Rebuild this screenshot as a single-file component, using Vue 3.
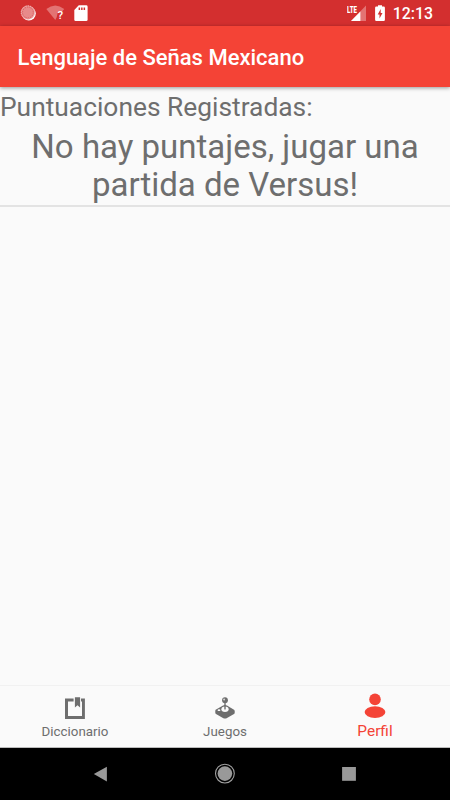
<script setup>
/**
 * App.vue
 *
 * Profile screen: registered scores and bottom navigation.
 */

import { ref } from 'vue'

const title = 'Lenguaje de Señas Mexicano'
const clock = '12:13'

// Bottom navigation entries
const tabs = [
  { id: 'dictionary', label: 'Diccionario' },
  { id: 'games', label: 'Juegos' },
  { id: 'profile', label: 'Perfil' }
]

const activeTab = ref('profile')
</script>

<template>
  <div class="screen">
    <!-- System status bar -->
    <header class="status-bar">
      <div class="status-left">
        <svg class="sync" width="17" height="17" viewBox="0 0 17 17">
          <circle cx="8.8" cy="8.6" r="7" fill="#fff" />
          <circle cx="7.9" cy="7.5" r="7" fill="#e88a8a" />
          <circle cx="7.9" cy="7.5" r="5.4" fill="none" stroke="#d95b5b" stroke-width="1" stroke-dasharray="1.2 1.2" />
          <circle cx="7.9" cy="7.5" r="6.7" fill="none" stroke="#f3c4c4" stroke-width="0.9" stroke-dasharray="1.2 1.2" />
        </svg>
        <div class="wifi">
          <svg width="20" height="16" viewBox="0 0 20 16">
            <path d="M0.3 4 Q9.3 -3 18.2 4 L15.4 7.6 H11.8 L10.6 12.6 L9.3 15 Z" fill="#e37373" />
          </svg>
          <span class="wifi-mark">?</span>
        </div>
        <svg class="sd" width="14" height="17" viewBox="0 0 14 17">
          <path d="M4.8 0.3 H12.2 Q13.6 0.3 13.6 1.7 V14.7 Q13.6 16 12.2 16 H1.6 Q0.3 16 0.3 14.7 V5 Z" fill="#fff" />
          <path d="M4.6 2.4 H6.1 V5 H4.6 Z M7.1 2.4 H8.6 V5 H7.1 Z M9.6 2.4 H11.1 V5 H9.6 Z" fill="#d32f2f" />
        </svg>
      </div>
      <div class="status-right">
        <div class="signal">
          <svg width="20" height="17" viewBox="0 0 20 17">
            <path d="M20 0.4 V16 H5 Z" fill="#e37373" />
            <path d="M14.4 6.4 V16 H5 Z" fill="#fff" />
          </svg>
          <span class="lte">LTE</span>
        </div>
        <svg class="battery" width="10" height="17" viewBox="0 0 10 17">
          <path d="M3 0.2 H7 V1.6 H8.7 Q9.9 1.6 9.9 2.8 V14.8 Q9.9 16 8.7 16 H1.3 Q0.1 16 0.1 14.8 V2.8 Q0.1 1.6 1.3 1.6 H3 Z" fill="#fff" />
          <path d="M5.7 4 L2.7 9.4 H4.5 V13.6 L7.5 8 H5.7 Z" fill="#d32f2f" />
        </svg>
        <span class="clock">{{ clock }}</span>
      </div>
    </header>

    <div class="toolbar">
      <h1>{{ title }}</h1>
    </div>

    <main class="content">
      <h2>Puntuaciones Registradas:</h2>
      <p class="empty">No hay puntajes, jugar una partida de Versus!</p>
    </main>

    <nav class="tabs">
      <button
        v-for="tab in tabs"
        :key="tab.id"
        :class="['tab', { active: activeTab === tab.id }]"
        @click="activeTab = tab.id"
      >
        <svg v-if="tab.id === 'dictionary'" width="26" height="26" viewBox="0 0 26 26">
          <path d="M3 2.6 H11.6 V5.6 H6 V20 H20 V5.6 H19 V2.6 H22.9 V23 H3 Z" fill="currentColor" />
          <path d="M12.9 1.2 H18.1 V11.6 L15.5 9.2 L12.9 11.6 Z" fill="currentColor" />
        </svg>
        <svg v-else-if="tab.id === 'games'" width="26" height="26" viewBox="0 0 26 26">
          <path d="M3.6 13.8 L10.6 9.7 Q13 8.5 15.4 9.7 L22 13.8 Q22.7 14.3 22.7 15.2 V17 Q22.7 17.7 22 18.1 L14.6 22.2 Q13 23 11.4 22.2 L4 18.1 Q3.3 17.7 3.3 17 V15.2 Q3.3 14.3 3.6 13.8 Z" fill="currentColor" />
          <ellipse cx="13" cy="13.2" rx="3.6" ry="2.7" fill="#fafafa" />
          <ellipse cx="7" cy="14.2" rx="1.4" ry="0.9" fill="#fafafa" />
          <path d="M12.3 6 H13.7 V12.4 L13 14.2 L12.3 12.4 Z" fill="currentColor" />
          <circle cx="13" cy="4.2" r="2.9" fill="currentColor" />
          <circle cx="12.1" cy="3.4" r="1" fill="#d5d5d5" />
        </svg>
        <svg v-else width="26" height="26" viewBox="0 0 26 26">
          <circle cx="13" cy="7.4" r="5.8" fill="currentColor" />
          <ellipse cx="13" cy="20.1" rx="10.4" ry="5.9" fill="currentColor" />
        </svg>
        <span>{{ tab.label }}</span>
      </button>
    </nav>

    <!-- System navigation bar -->
    <footer class="system-nav">
      <svg width="26" height="26" viewBox="0 0 26 26">
        <path d="M18.9 5.7 V20.5 L5.8 13.1 Z" fill="#999" />
      </svg>
      <svg width="26" height="26" viewBox="0 0 26 26">
        <circle cx="12.9" cy="12.6" r="9.4" fill="none" stroke="#a0a0a0" stroke-width="1.1" />
        <circle cx="12.9" cy="12.6" r="7.3" fill="#999" />
      </svg>
      <svg width="26" height="26" viewBox="0 0 26 26">
        <rect x="6.1" y="6" width="13.8" height="13.8" fill="#999" />
      </svg>
    </footer>
  </div>
</template>

<style>
body {
  margin: 0;
}
</style>

<style scoped>
.screen {
  width: 450px;
  height: 800px;
  display: flex;
  flex-direction: column;
  overflow: hidden;
  background: #fafafa;
  color: #6e6e6e;
  font-family: Roboto, "Liberation Sans", sans-serif;
}

svg {
  display: block;
  flex: none;
}

/* Status bar */
.status-bar {
  flex: none;
  box-sizing: border-box;
  height: 26px;
  padding: 0 17px 0 20px;
  display: flex;
  justify-content: space-between;
  background: #d32f2f;
  color: #fff;
}

.status-left,
.status-right {
  display: flex;
  align-items: flex-start;
  padding-top: 5px;
}

.wifi {
  position: relative;
  margin: 0 8px 0 9px;
}

.wifi-mark {
  position: absolute;
  left: 11.5px;
  top: 4px;
  font-size: 11.5px;
  line-height: 13px;
  font-weight: 500;
}

.signal {
  position: relative;
  margin-right: 9px;
}

.lte {
  position: absolute;
  left: 1px;
  top: 0;
  font-size: 9.5px;
  line-height: 9px;
  font-weight: 900;
  transform: scaleX(0.64);
  transform-origin: left top;
}

.clock {
  margin-left: 8px;
  font-size: 15.9px;
  line-height: 18px;
  font-weight: 500;
}

/* Toolbar */
.toolbar {
  position: relative;
  flex: none;
  height: 61px;
  display: flex;
  align-items: center;
  padding-left: 17.5px;
  background: #f44336;
  color: #fff;
  box-shadow: 0 1px 4px rgba(0, 0, 0, 0.4);
}

.toolbar h1 {
  margin: 3px 0 0;
  font-size: 22px;
  line-height: 26px;
  font-weight: 500;
}

/* Scores */
.content {
  flex: 1;
}

.content h2 {
  margin: 0;
  padding: 5px 0 0;
  font-size: 26.35px;
  line-height: 31px;
  font-weight: 400;
}

.empty {
  margin: 0;
  padding: 5px 20px 1px;
  border-bottom: 2px solid #e3e3e3;
  font-size: 33px;
  line-height: 38px;
  text-align: center;
}

/* Bottom navigation */
.tabs {
  flex: none;
  box-sizing: border-box;
  height: 63px;
  display: flex;
  border-top: 1px solid #f1f1f1;
  border-bottom: 1px solid #bbb;
}

.tab {
  flex: 1;
  display: flex;
  flex-direction: column;
  align-items: center;
  padding: 10px 0 0;
  border: 0;
  background: none;
  color: #6e6e6e;
  font-family: inherit;
  font-size: 13.35px;
  line-height: 16px;
}

.tab span {
  margin-top: 2px;
}

.tab.active {
  padding-top: 6px;
  color: #f44336;
  font-size: 15.4px;
  line-height: 18px;
}

.tab.active span {
  margin-top: 4px;
}

/* System navigation */
.system-nav {
  flex: none;
  box-sizing: border-box;
  height: 52px;
  padding: 13px 88px 0;
  display: flex;
  justify-content: space-between;
  background: #000;
}
</style>
